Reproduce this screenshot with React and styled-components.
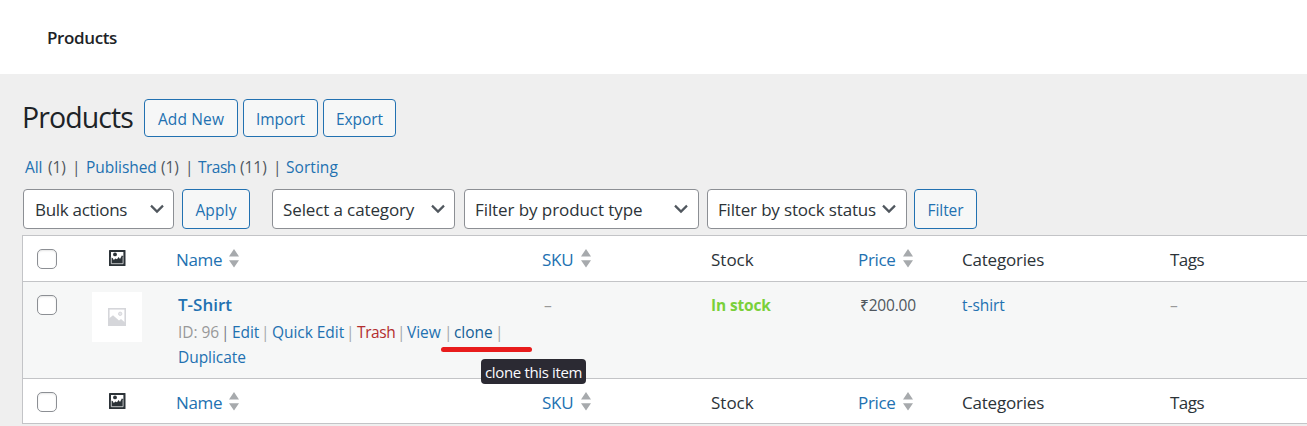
import React from "react";
import styled, { createGlobalStyle, css } from "styled-components";

const blue = "#2271b1";

const GlobalStyle = createGlobalStyle`
  * { box-sizing: border-box; }
  body {
    margin: 0;
    background: #efefef;
    color: #2c3338;
    font-family: "Segoe UI", "Open Sans", "Noto Sans", sans-serif;
    overflow: hidden;
  }
`;

const Page = styled.div`
  width: 1307px;
  height: 426px;
  overflow: hidden;
`;

const TopBar = styled.header`
  height: 74px;
  padding: 0 0 0 47px;
  display: flex;
  align-items: center;
  background: #fff;
  color: #1d2327;
`;

const Text = styled.span`
  display: inline-block;
  flex: none;
  width: ${(p) => (p.$w ? `${p.$w}px` : "auto")};
  font-size: ${(p) => p.$size || 16}px;
  font-weight: ${(p) => p.$weight || 400};
  letter-spacing: ${(p) => p.$ls || 0}px;
  color: ${(p) => p.$color || "inherit"};
  white-space: nowrap;
`;

const Separator = styled(Text)`
  margin-left: ${(p) => p.$shift || -2}px;
`;

const TitleRow = styled.div`
  display: flex;
  height: 38px;
  margin: 25px 0 0 22px;
`;

const Title = styled.h1`
  width: 122px;
  margin: 0;
  font-size: 28.5px;
  font-weight: 400;
  line-height: 37px;
  letter-spacing: -0.9px;
  color: #1d2327;
`;

const Button = styled.button`
  width: ${(p) => p.$w}px;
  height: ${(p) => p.$h || 38}px;
  margin: 0 ${(p) => p.$gap || 0}px 0 0;
  padding: 2px 0 0;
  display: flex;
  flex: none;
  align-items: center;
  justify-content: center;
  border: 1px solid ${blue};
  border-radius: 4px;
  background: #f6f7f7;
  color: ${blue};
  font-family: inherit;
`;

const Views = styled.nav`
  display: flex;
  align-items: center;
  height: 24px;
  margin: 18px 0 0 25px;
  color: #50575e;
`;

const Toolbar = styled.div`
  display: flex;
  height: 40px;
  margin: 10px 0 6px 23px;
`;

const SelectBox = styled.div`
  display: flex;
  flex: none;
  align-items: center;
  justify-content: space-between;
  width: ${(p) => p.$w}px;
  margin-right: ${(p) => p.$gap}px;
  padding: 0 ${(p) => p.$end || 10}px 0 ${(p) => p.$pad || 10}px;
  border: 1px solid #8c8f94;
  border-radius: 4px;
  background: #fff;
`;

const Table = styled.div`
  margin-left: 22px;
  border: solid #c3c4c7;
  border-width: 1px 0 1px 1px;
  background: #fff;
`;

const columns = css`
  display: grid;
  grid-template-columns: 69px 84px 366px 169px 147px 104px 208px 1fr;
`;

const HeadRow = styled.div`
  ${columns}
  height: ${(p) => p.$h}px;
  align-items: center;
  padding-top: ${(p) => p.$top || 0}px;
`;

const BodyRow = styled.div`
  ${columns}
  height: 98px;
  border: solid #c3c4c7;
  border-width: 1px 0;
  background: #f6f7f7;
`;

const HeadCell = styled.div`
  display: flex;
  align-items: center;
  gap: 7px;
  color: ${(p) => (p.$link ? blue : "inherit")};

  ${Text} {
    padding-top: ${(p) => p.$drop || 0}px;
  }
`;

const Cell = styled.div`
  padding: ${(p) => p.$top || 0}px 0 0 ${(p) => p.$left || 0}px;
  line-height: 24px;
`;

const Checkbox = styled.div`
  width: 20px;
  height: 20px;
  margin-left: 14px;
  border: 1px solid #8c8f94;
  border-radius: 5px;
  background: #fff;
  box-shadow: inset 0 1px 2px rgba(0, 0, 0, 0.1);
`;

const Thumb = styled.div`
  display: flex;
  align-items: center;
  justify-content: center;
  width: 50px;
  height: 50px;
  margin-top: 10px;
  background: #fff;
`;

const NameCell = styled.div`
  display: flex;
  flex-direction: column;
  padding: 10px 0 0 2px;
`;

const Line = styled.div`
  display: flex;
  height: ${(p) => p.$h}px;
  line-height: ${(p) => p.$h}px;
`;

const CloneAction = styled.span`
  position: relative;
  flex: none;
`;

const Underline = styled.span`
  position: absolute;
  left: -13px;
  top: 29px;
  width: 91px;
  height: 5px;
  border-radius: 3px;
  background: #e81c1c;
`;

const Tooltip = styled.span`
  position: absolute;
  left: 27px;
  top: 41px;
  z-index: 2;
  width: 105px;
  height: 25px;
  padding-left: 4px;
  border-radius: 4px;
  background: #2b2a33;
  line-height: 27px;
`;

const IconSlot = styled.div`
  display: flex;
  padding: 0 0 1px 17px;
`;

const Chevron = () => (
  <svg width="14" height="10" viewBox="0 0 14 10" fill="none" stroke="#50575e" strokeWidth="2.2">
    <path d="M1 1.6 L7 7.6 L13 1.6" />
  </svg>
);

const SortArrows = () => (
  <svg width="10" height="19" viewBox="0 0 10 19" fill="#a7aaad">
    <path d="M5 0 L10 7.4 H0 Z M0 11.2 H10 L5 18.6 Z" />
  </svg>
);

const ImageIcon = () => (
  <svg width="17" height="17" viewBox="0 0 17 17">
    <rect width="16.5" height="16" rx="0.6" fill="#2c3338" />
    <path d="M2 2 H14.4 V7 L13 5.2 L11 9 L9.6 7 L8 9.2 L6.4 8.6 L4.8 10 L3.6 8 L2 7.6 Z" fill="#fff" />
    <path d="M2.3 7 V13.7 H14.1 V7" fill="none" stroke="#fff" strokeWidth="0.7" />
    <circle cx="6" cy="4.4" r="1.9" fill="#2c3338" />
  </svg>
);

const PlaceholderIcon = () => (
  <svg width="18" height="18" viewBox="0 0 18 18">
    <rect x="0.8" y="0.8" width="16.4" height="16.4" fill="#fff" stroke="#d5d6da" strokeWidth="1.6" />
    <path d="M1 10.5 L5 7.2 L11 12.4 L13 11 L17 14.5 V17 H1 Z" fill="#d5d6da" />
    <circle cx="12.2" cy="5.8" r="1.7" fill="#e6e7ea" stroke="#d0d1d5" strokeWidth="0.8" />
  </svg>
);

const HeaderCells = ({ drop }) => (
  <>
    <Checkbox />
    <HeadCell><IconSlot><ImageIcon /></IconSlot></HeadCell>
    <HeadCell $link $drop={drop}><Text $size={17} $ls={-0.35} $w={46}>Name</Text><SortArrows /></HeadCell>
    <HeadCell $link $drop={drop}><Text $size={17} $ls={-0.2} $w={32}>SKU</Text><SortArrows /></HeadCell>
    <HeadCell $drop={drop}><Text $size={17} $ls={0}>Stock</Text></HeadCell>
    <HeadCell $link $drop={drop}><Text $size={17} $ls={-0.35} $w={38}>Price</Text><SortArrows /></HeadCell>
    <HeadCell $drop={drop}><Text $size={17} $ls={-0.2}>Categories</Text></HeadCell>
    <HeadCell $drop={drop}><Text $size={17} $ls={-0.5}>Tags</Text></HeadCell>
  </>
);

const small = { $size: 15.5, $ls: -0.05 };
const bar = { $size: 15.5 };

export default function App() {
  return (
    <>
      <GlobalStyle />
      <Page>
        <TopBar><Text $size={17} $weight={600} $ls={-0.38}>Products</Text></TopBar>
        <TitleRow>
          <Title>Products</Title>
          <Button $w={94} $gap={5}><Text {...small} $ls={0.15}>Add New</Text></Button>
          <Button $w={75} $gap={5}><Text {...small}>Import</Text></Button>
          <Button $w={73}><Text {...small}>Export</Text></Button>
        </TitleRow>
        <Views>
          <Text {...small} $w={23} $color={blue}>All</Text>
          <Text {...small} $w={26}>(1)</Text>
          <Separator {...bar} $w={14}>|</Separator>
          <Text {...small} $w={75} $color={blue}>Published</Text>
          <Text {...small} $w={26}>(1)</Text>
          <Separator {...bar} $w={13}>|</Separator>
          <Text {...small} $w={42} $ls={-0.5} $color={blue}>Trash</Text>
          <Text {...small} $w={35}>(11)</Text>
          <Separator {...bar} $w={13}>|</Separator>
          <Text {...small} $ls={0.05} $color={blue}>Sorting</Text>
        </Views>
        <Toolbar>
          <SelectBox $w={151} $gap={8} $end={9} $pad={11}><Text $size={17} $ls={-0.3}>Bulk actions</Text><Chevron /></SelectBox>
          <Button $w={68} $h={40} $gap={22}><Text {...small} $ls={0.15}>Apply</Text></Button>
          <SelectBox $w={183} $gap={9} $end={9}><Text $size={17} $ls={-0.12}>Select a category</Text><Chevron /></SelectBox>
          <SelectBox $w={235} $gap={8}><Text $size={17} $ls={-0.08}>Filter by product type</Text><Chevron /></SelectBox>
          <SelectBox $w={200} $gap={7}><Text $size={17} $ls={-0.17}>Filter by stock status</Text><Chevron /></SelectBox>
          <Button $w={63} $h={40}><Text {...small}>Filter</Text></Button>
        </Toolbar>
        <Table>
          <HeadRow $h={45}><HeaderCells drop={2} /></HeadRow>
          <BodyRow>
            <Cell $top={13}><Checkbox /></Cell>
            <Thumb><PlaceholderIcon /></Thumb>
            <NameCell>
              <Line $h={26}><Text $size={17} $weight={600} $ls={0} $color={blue}>T-Shirt</Text></Line>
              <Line $h={28}>
                <Text {...small} $w={47} $color="#999">ID: 96</Text>
                <Separator {...bar} $shift={-4} $w={11} $color="#787c82">|</Separator>
                <Text {...small} $w={33} $color={blue}>Edit</Text>
                <Separator {...bar} $shift={-4} $w={11} $color="#a7aaad">|</Separator>
                <Text {...small} $w={78} $color={blue}>Quick Edit</Text>
                <Separator {...bar} $shift={-4} $w={11} $color="#a7aaad">|</Separator>
                <Text {...small} $w={43} $ls={-0.4} $color="#b32d2e">Trash</Text>
                <Separator {...bar} $shift={-3} $w={10} $color="#a7aaad">|</Separator>
                <Text {...small} $w={40} $color={blue}>View</Text>
                <Separator {...bar} $shift={-3} $w={10} $color="#a7aaad">|</Separator>
                <CloneAction>
                  <Text {...small} $w={43} $color="#135e96">clone</Text>
                  <Underline />
                  <Tooltip><Text $size={15} $ls={-0.35} $color="#fbfbfe">clone this item</Text></Tooltip>
                </CloneAction>
                <Separator {...bar} $w={9} $color="#a7aaad">|</Separator>
              </Line>
              <Line $h={22}><Text {...small} $color={blue}>Duplicate</Text></Line>
            </NameCell>
            <Cell $top={11} $left={2}><Text {...small} $color="#999">–</Text></Cell>
            <Cell $top={11}><Text {...small} $ls={-0.15} $weight={700} $color="#7ad03a">In stock</Text></Cell>
            <Cell $top={11} $left={2}><Text {...small} $ls={-0.2} $color="#50575e">₹200.00</Text></Cell>
            <Cell $top={11}><Text {...small} $color={blue}>t-shirt</Text></Cell>
            <Cell $top={11}><Text {...small} $color="#999">–</Text></Cell>
          </BodyRow>
          <HeadRow $h={44} $top={1}><HeaderCells drop={1} /></HeadRow>
        </Table>
      </Page>
    </>
  );
}
